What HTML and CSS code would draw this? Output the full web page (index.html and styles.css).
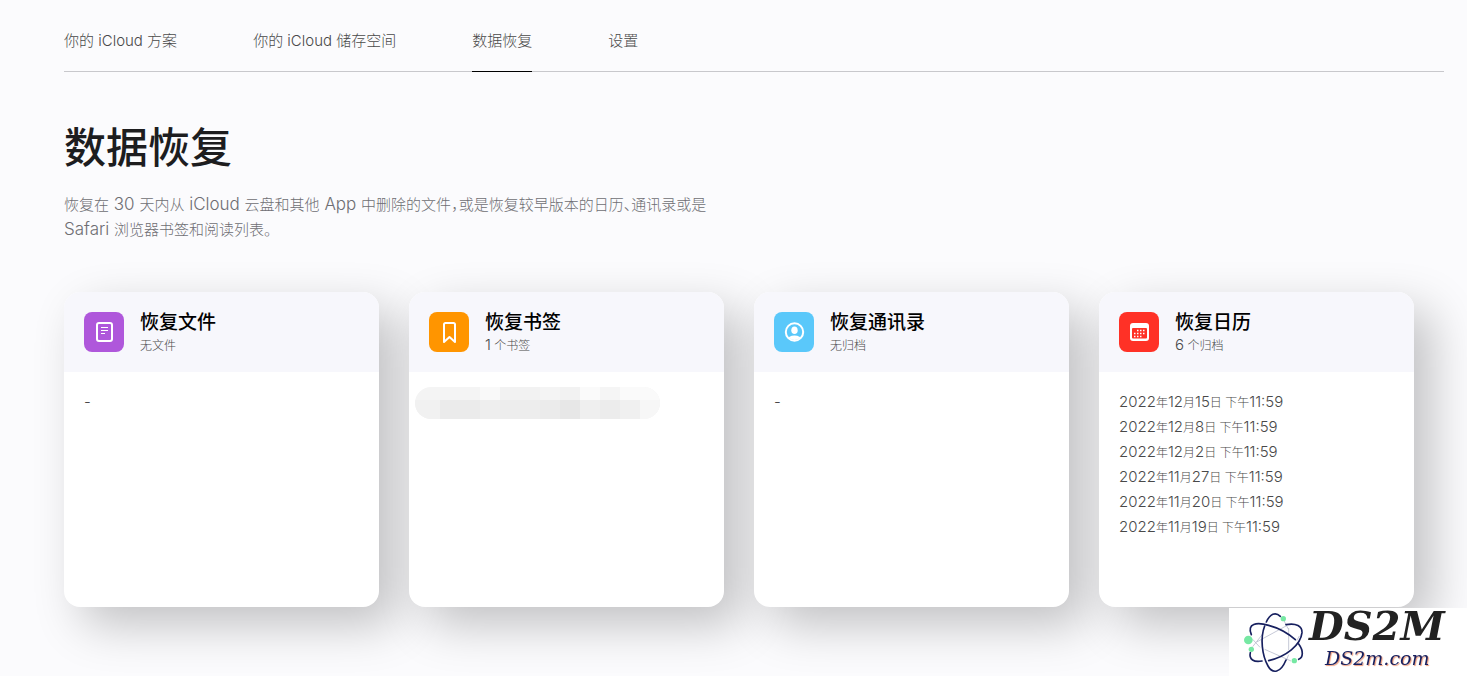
FILE: index.html
```
<!DOCTYPE html>
<html lang="zh-CN">
<head>
  <meta charset="UTF-8">
  <meta name="viewport" content="width=device-width,initial-scale=1">
  <title>数据恢复</title>
  <link rel="stylesheet" href="styles.css">
</head>
<body>
  <div class="page">
    <nav class="tabs">
      <a href="#">你的 iCloud 方案</a>
      <a href="#">你的 iCloud 储存空间</a>
      <a href="#" class="active">数据恢复</a>
      <a href="#">设置</a>
    </nav>

    <main>
      <h1>数据恢复</h1>
      <p class="intro">恢复在<span class="latin"> 30 </span>天内从<span class="latin"> iCloud </span>云盘和其他<span class="latin"> App </span>中删除的文件<span class="half">，</span>或是恢复较早版本的日历<span class="half">、</span>通讯录或是<span class="latin"> Safari </span>浏览器书签和阅读列表。</p>

      <div class="cards">
        <section class="card">
          <header>
            <svg class="icon files" viewBox="0 0 40 40">
              <rect x="13" y="11" width="15" height="18" rx="2" fill="none" stroke="#fff" stroke-width="2"/>
              <path d="M17 15.500h7M17 18.500h7M17 21.500h4" stroke="#fff" stroke-width="1" fill="none"/>
            </svg>
            <div>
              <h2>恢复文件</h2>
              <p class="sub">无文件</p>
            </div>
          </header>
          <div class="content">-</div>
        </section>

        <section class="card">
          <header>
            <svg class="icon bookmarks" viewBox="0 0 40 40">
              <path d="M15 30V12.500q0-1.500 1.500-1.500h8q1.500 0 1.500 1.500v17.500l-5.500-5z" fill="none" stroke="#fff" stroke-width="2" stroke-linejoin="round"/>
            </svg>
            <div>
              <h2>恢复书签</h2>
              <p class="sub"><span class="num">1</span> 个书签</p>
            </div>
          </header>
          <div class="content masked">
            <svg class="mosaic" viewBox="0 0 245 32">
              <clipPath id="pill"><rect width="245" height="32" rx="16"/></clipPath>
              <g clip-path="url(#pill)">
                <rect width="245" height="32" fill="#f4f4f4"/>
                <rect x="65" width="20" height="13" fill="#f9f9f9"/>
                <rect x="85" width="40" height="13" fill="#f2f2f2"/>
                <rect x="145" width="20" height="13" fill="#f2f2f2"/>
                <rect x="165" width="20" height="13" fill="#fafafa"/>
                <rect x="185" width="20" height="13" fill="#f5f5f5"/>
                <rect x="205" width="40" height="13" fill="#fafafa"/>
                <rect y="13" width="25" height="19" fill="#f1f1f1"/>
                <rect x="25" y="13" width="40" height="19" fill="#ebebeb"/>
                <rect x="65" y="13" width="20" height="19" fill="#eee"/>
                <rect x="85" y="13" width="40" height="19" fill="#ededed"/>
                <rect x="125" y="13" width="20" height="19" fill="#ebebeb"/>
                <rect x="145" y="13" width="20" height="19" fill="#e7e7e7"/>
                <rect x="165" y="13" width="20" height="19" fill="#efefef"/>
                <rect x="185" y="13" width="20" height="19" fill="#ececec"/>
                <rect x="205" y="13" width="20" height="19" fill="#f0f0f0"/>
                <rect x="225" y="13" width="20" height="19" fill="#f7f7f7"/>
              </g>
            </svg>
          </div>
        </section>

        <section class="card">
          <header>
            <svg class="icon contacts" viewBox="0 0 40 40">
              <clipPath id="face"><circle cx="20.500" cy="20" r="8"/></clipPath>
              <circle cx="20.500" cy="20" r="8.700" fill="none" stroke="#fff" stroke-width="2"/>
              <g fill="#fff" clip-path="url(#face)">
                <ellipse cx="20.500" cy="18.300" rx="3.200" ry="3.800"/>
                <ellipse cx="20.500" cy="28" rx="7" ry="4.500"/>
              </g>
            </svg>
            <div>
              <h2>恢复通讯录</h2>
              <p class="sub">无归档</p>
            </div>
          </header>
          <div class="content">-</div>
        </section>

        <section class="card">
          <header>
            <svg class="icon calendar" viewBox="0 0 40 40">
              <rect x="11" y="11" width="19" height="18" rx="3" fill="#fff"/>
              <rect x="13" y="16" width="15" height="10.500" rx="1" fill="#ff3126"/>
              <path d="M18 18.500h9M15 21.500h12M15 24.500h8" stroke="#fff" stroke-width="1.500" stroke-dasharray="1.500 1.500" fill="none"/>
            </svg>
            <div>
              <h2>恢复日历</h2>
              <p class="sub"><span class="num">6</span> 个归档</p>
            </div>
          </header>
          <ul class="content dates">
            <li>2022<span>年</span>12<span>月</span>15<span>日 下午</span>11:59</li>
            <li>2022<span>年</span>12<span>月</span>8<span>日 下午</span>11:59</li>
            <li>2022<span>年</span>12<span>月</span>2<span>日 下午</span>11:59</li>
            <li>2022<span>年</span>11<span>月</span>27<span>日 下午</span>11:59</li>
            <li>2022<span>年</span>11<span>月</span>20<span>日 下午</span>11:59</li>
            <li>2022<span>年</span>11<span>月</span>19<span>日 下午</span>11:59</li>
          </ul>
        </section>
      </div>
    </main>
  </div>

  <div class="watermark">
    <svg class="atom" viewBox="0 0 240 204">
      <g transform="translate(21 -6)">
        <path d="M150 60L62 108M50 100L72 124M50 122L80 84M86 130L165 165M158 66V132M142 40L156 68M150 166L158 146M182 104L190 90" fill="none" stroke="#a9adc2" stroke-width="2"/>
        <g fill="none" stroke="#17205f" stroke-width="5" stroke-linecap="round">
          <path d="M91 48C102 24 118 16 133 31"/>
          <path d="M86 60C72 96 78 148 96 180C110 205 134 201 150 162"/>
          <path d="M46 86C32 52 62 48 98 58C132 67 158 83 178 101"/>
          <path d="M150 56C181 50 199 61 198 80C194 118 150 152 98 164"/>
          <path d="M188 114C203 134 202 154 188 160"/>
          <path d="M43 140C38 160 54 170 78 165"/>
        </g>
        <g fill="#76e8a3">
          <circle cx="37" cy="102" r="13"/>
          <circle cx="46" cy="130" r="8"/>
          <circle cx="142" cy="38" r="8"/>
          <circle cx="175" cy="164" r="8"/>
        </g>
      </g>
    </svg>
    <div class="brand">
      <strong>DS2M</strong>
      <span>DS2m.com</span>
    </div>
  </div>
</body>
</html>
```
FILE: styles.css
```
*{
  margin: 0; padding: 0;
  box-sizing: border-box;
}
body{
  font-family: Inter, "Noto Sans CJK SC", sans-serif;
  font-weight: 300;
  color: #494949;
  background: #fbfbfd;
}
.page{
  padding: 0 23px 69px 64px;
}
.tabs{
  display: flex;
  gap: 76px;
  height: 72px;
  border-bottom: 1px solid #c8c8cc;
}
.tabs a{
  font-size: 15px;
  line-height: 24px;
  padding-top: 29px;
  height: 72px;
  color: #494949;
  text-decoration: none;
}
.tabs .active{
  border-bottom: 1px solid #000;
}
h1{
  margin-top: 44px;
  font-size: 42px;
  line-height: 64px;
  font-weight: 500;
  color: #1d1d1f;
}
.intro{
  max-width: 660px;
  margin-top: 12px;
  font-size: 15px;
  line-height: 25px;
  color: #6e6e73;
}
.latin{
  font-size: 17px;
}
.half{
  font-feature-settings: "halt";
}
.cards{
  display: grid;
  grid-template-columns: repeat(4, 1fr);
  gap: 30px;
  margin-top: 50px;
  padding-right: 30px;
}
.card{
  min-height: 315px;
  border-radius: 16px;
  overflow: hidden;
  background: #fff;
  box-shadow: 18px 18px 48px rgba(0,0,0,0.23);
}
.card header{
  display: flex;
  gap: 16px;
  height: 80px;
  padding: 18px 20px;
  background: #f7f7fc;
}
.icon{
  width: 40px;
  height: 40px;
  margin-top: 2px;
  border-radius: 8px;
}
.files{ background: #af57db; }
.bookmarks{ background: #ff9500; }
.contacts{ background: #5ac8fa; }
.calendar{ background: #ff3126; }
h2{
  font-size: 19px;
  line-height: 26px;
  font-weight: 500;
  color: #000;
}
.sub{
  font-size: 12px;
  line-height: 20px;
}
.num{
  font-size: 15px;
  line-height: 16px;
}
.content{
  padding: 17px 20px;
  font-size: 15px;
  line-height: 25px;
  list-style: none;
}
.dates span{
  font-size: 12px;
  line-height: 16px;
}
.masked{
  padding: 15px 6px;
}
.mosaic{
  display: block;
  width: 245px;
  height: 32px;
}
.watermark{
  position: fixed;
  right: 0;
  bottom: 0;
  display: flex;
  width: 238px;
  height: 68px;
  background: #fff;
}
.atom{
  width: 80px;
  height: 68px;
}
.brand{
  display: flex;
  flex-direction: column;
  font-family: "DejaVu Serif", serif;
  font-style: italic;
}
.brand strong{
  font-size: 40px;
  line-height: 36px;
  font-weight: 700;
  color: #222;
}
.brand span{
  padding-left: 16px;
  font-size: 19px;
  line-height: 28px;
  font-weight: 400;
  color: #17205f;
  text-shadow: 1px 1px 1px #ee9a78;
}
```
